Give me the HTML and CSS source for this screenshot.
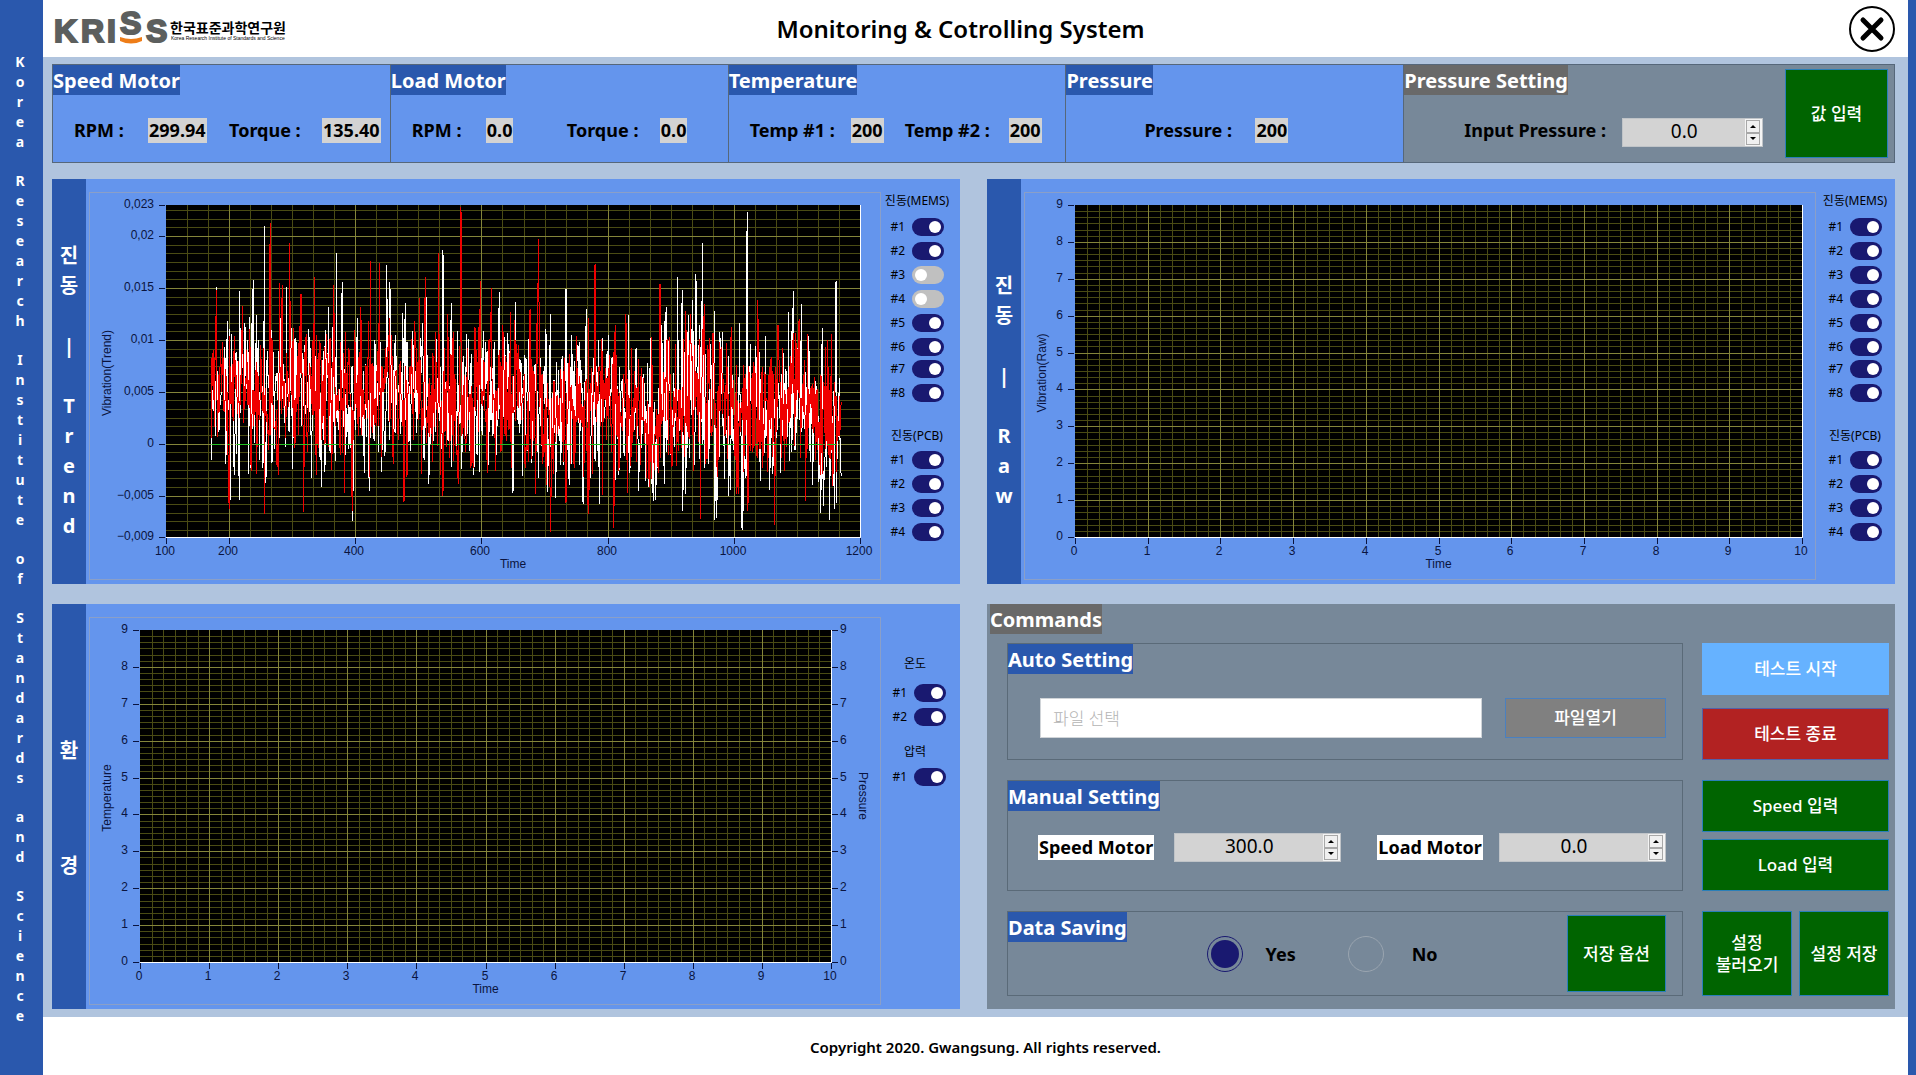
FILE: index.html
```html
<!DOCTYPE html>
<html lang="ko">
<head>
<meta charset="utf-8">
<title>Monitoring &amp; Cotrolling System</title>
<link rel="stylesheet" href="styles.css">
</head>
<body>
<div class="app">
  <aside class="rail">
    <span class="rail-word">K
o
r
e
a</span>
    <span class="rail-word">R
e
s
e
a
r
c
h</span>
    <span class="rail-word">I
n
s
t
i
t
u
t
e</span>
    <span class="rail-word">o
f</span>
    <span class="rail-word">S
t
a
n
d
a
r
d
s</span>
    <span class="rail-word">a
n
d</span>
    <span class="rail-word">S
c
i
e
n
c
e</span>
  </aside>

  <div class="page">
    <header class="header">
      <svg class="logo" width="248" height="56" viewBox="-4 -8 248 56" role="img" aria-label="KRISS">
        <g class="logo-kriss">
          <text x="-2 25 51" y="33">KRI</text>
          <text x="64" y="25">S</text>
          <text x="90" y="33">S</text>
        </g>
        <path d="M64 28 Q75 32 86 28 V32 Q75 37 64 32 Z" fill="#ee7d18"/>
        <text class="logo-korean" x="114" y="24">한국표준과학연구원</text>
        <text class="logo-english" x="115" y="31">Korea Research Institute of Standards and Science</text>
      </svg>
      <h1 class="title">Monitoring &amp; Cotrolling System</h1>
      <button class="close" type="button" aria-label="Close">
        <svg width="46" height="46" viewBox="0 0 46 46">
          <circle cx="23" cy="23" r="22" fill="none" stroke="#000" stroke-width="2"/>
          <path d="M14 14 L32 32 M32 14 L14 32" stroke="#000" stroke-width="5" stroke-linecap="round"/>
        </svg>
      </button>
    </header>

    <main class="main">
      <section class="status">
        <div class="status-cell">
          <h2 class="tag">Speed Motor</h2>
          <div class="readings readings-motor">
            <span>RPM :</span><output>299.94</output><span>Torque :</span><output>135.40</output>
          </div>
        </div>
        <div class="status-cell">
          <h2 class="tag">Load Motor</h2>
          <div class="readings readings-motor">
            <span>RPM :</span><output>0.0</output><span>Torque :</span><output>0.0</output>
          </div>
        </div>
        <div class="status-cell">
          <h2 class="tag">Temperature</h2>
          <div class="readings readings-temp">
            <span>Temp #1 :</span><output>200</output><span>Temp #2 :</span><output>200</output>
          </div>
        </div>
        <div class="status-cell">
          <h2 class="tag">Pressure</h2>
          <div class="readings readings-pressure">
            <span>Pressure :</span><output>200</output>
          </div>
        </div>
        <div class="status-cell status-setting">
          <div>
            <h2 class="tag tag-gray">Pressure Setting</h2>
            <div class="readings readings-setting">
              <label for="pressure-input">Input Pressure :</label>
              <div class="spinner">
                <input id="pressure-input" type="text" inputmode="decimal" value="0.0">
                <div class="spinner-buttons"><button type="button" class="up" aria-label="Increase"></button><button type="button" class="down" aria-label="Decrease"></button></div>
              </div>
            </div>
          </div>
          <button class="btn btn-green" type="button">값 입력</button>
        </div>
      </section>

      <div class="panels">
        <section class="panel panel-trend">
          <h2 class="tab tab-offset">진
동

|

T
r
e
n
d</h2>
          <div class="frame"><svg class="chart" data-chart="trend"></svg></div>
          <div class="switches">
            <h3>진동(MEMS)</h3>
            <label>#1<input type="checkbox" checked></label>
            <label>#2<input type="checkbox" checked></label>
            <label>#3<input type="checkbox"></label>
            <label>#4<input type="checkbox"></label>
            <label>#5<input type="checkbox" checked></label>
            <label>#6<input type="checkbox" checked></label>
            <label class="tight">#7<input type="checkbox" checked></label>
            <label>#8<input type="checkbox" checked></label>
            <h3 class="second">진동(PCB)</h3>
            <label>#1<input type="checkbox" checked></label>
            <label>#2<input type="checkbox" checked></label>
            <label>#3<input type="checkbox" checked></label>
            <label>#4<input type="checkbox" checked></label>
          </div>
        </section>

        <section class="panel panel-raw">
          <h2 class="tab tab-offset">진
동

|

R
a
w</h2>
          <div class="frame"><svg class="chart" data-chart="raw"></svg></div>
          <div class="switches">
            <h3>진동(MEMS)</h3>
            <label>#1<input type="checkbox" checked></label>
            <label>#2<input type="checkbox" checked></label>
            <label>#3<input type="checkbox" checked></label>
            <label>#4<input type="checkbox" checked></label>
            <label>#5<input type="checkbox" checked></label>
            <label>#6<input type="checkbox" checked></label>
            <label class="tight">#7<input type="checkbox" checked></label>
            <label>#8<input type="checkbox" checked></label>
            <h3 class="second">진동(PCB)</h3>
            <label>#1<input type="checkbox" checked></label>
            <label>#2<input type="checkbox" checked></label>
            <label>#3<input type="checkbox" checked></label>
            <label>#4<input type="checkbox" checked></label>
          </div>
        </section>

        <section class="panel panel-env">
          <h2 class="tab tab-spread"><span>환</span><span>경</span></h2>
          <div class="frame"><svg class="chart" data-chart="environment"></svg></div>
          <div class="switches">
            <h3>온도</h3>
            <label>#1<input type="checkbox" checked></label>
            <label>#2<input type="checkbox" checked></label>
            <h3 class="second">압력</h3>
            <label>#1<input type="checkbox" checked></label>
          </div>
        </section>

        <section class="commands">
          <h2 class="tag tag-gray commands-title">Commands</h2>
          <div class="commands-grid">
            <div class="box">
              <h3 class="tag">Auto Setting</h3>
              <div class="file-row">
                <input class="file-name" type="text" placeholder="파일 선택" aria-label="파일 선택">
                <button class="btn btn-file" type="button">파일열기</button>
              </div>
            </div>
            <div class="actions actions-spread">
              <button class="btn btn-start" type="button">테스트 시작</button>
              <button class="btn btn-stop" type="button">테스트 종료</button>
            </div>

            <div class="box">
              <h3 class="tag">Manual Setting</h3>
              <div class="manual-row">
                <label class="chip" for="speed-input">Speed Motor</label>
                <div class="spinner">
                  <input id="speed-input" type="text" inputmode="decimal" value="300.0">
                  <div class="spinner-buttons"><button type="button" class="up" aria-label="Increase"></button><button type="button" class="down" aria-label="Decrease"></button></div>
                </div>
                <label class="chip" for="load-input">Load Motor</label>
                <div class="spinner">
                  <input id="load-input" type="text" inputmode="decimal" value="0.0">
                  <div class="spinner-buttons"><button type="button" class="up" aria-label="Increase"></button><button type="button" class="down" aria-label="Decrease"></button></div>
                </div>
              </div>
            </div>
            <div class="actions">
              <button class="btn btn-green" type="button">Speed 입력</button>
              <button class="btn btn-green" type="button">Load 입력</button>
            </div>

            <div class="box box-saving">
              <h3 class="tag">Data Saving</h3>
              <div class="choices">
                <label><input type="radio" name="saving" checked>Yes</label>
                <label><input type="radio" name="saving">No</label>
              </div>
              <button class="btn btn-green" type="button">저장 옵션</button>
            </div>
            <div class="actions actions-row">
              <button class="btn btn-green" type="button">설정<br>불러오기</button>
              <button class="btn btn-green" type="button">설정 저장</button>
            </div>
          </div>
        </section>
      </div>
    </main>

    <footer class="footer">Copyright 2020. Gwangsung. All rights reserved.</footer>
  </div>
</div>
<script src="charts.js"></script>
</body>
</html>
```
FILE: styles.css
```css
* { box-sizing: border-box; }

body {
  margin: 0;
  font-family: "Noto Sans", "Noto Sans CJK KR", sans-serif;
  font-size: 17px;
  color: #000;
  background: #2a58ad;
}

h1, h2, h3 { margin: 0; }

button, input { font: inherit; margin: 0; }

.app {
  display: flex;
  min-height: 100vh;
  padding-right: 8px;
}

/* left rail */
.rail {
  flex: none;
  display: flex;
  flex-direction: column;
  gap: 19px;
  width: 43px;
  padding: 52px 3px 0 0;
  color: #fff;
  font-size: 14px;
  font-weight: 700;
  line-height: 20px;
  text-align: center;
}

.rail-word { white-space: pre; }

.page {
  flex: 1;
  display: flex;
  flex-direction: column;
  min-width: 0;
}

/* header and footer */
.header {
  display: grid;
  grid-template-columns: 1fr auto 1fr;
  align-items: center;
  height: 57px;
  padding: 0 13px;
  background: #fff;
}

.logo {
  display: block;
  margin-left: -4px;
  overflow: visible;
}

.logo-kriss {
  font-family: "Liberation Sans", sans-serif;
  font-size: 32px;
  font-weight: 700;
  fill: #5c5f5e;
  stroke: #5c5f5e;
  stroke-width: 2px;
}

.logo-korean {
  font-family: "Noto Sans CJK KR", sans-serif;
  font-size: 14px;
  font-weight: 700;
}

.logo-english {
  font-family: "Liberation Sans", sans-serif;
  font-size: 5px;
}

.title {
  margin-right: 30px;
  font-size: 24px;
  font-weight: 600;
  line-height: 32px;
}

.close {
  justify-self: end;
  display: block;
  width: 46px;
  height: 46px;
  padding: 0;
  border: 0;
  border-radius: 50%;
  background: none;
}

.close svg { display: block; }

.footer {
  height: 58px;
  padding: 0 0 0 20px;
  background: #fff;
  font-size: 15px;
  font-weight: 600;
  line-height: 60px;
  text-align: center;
}

/* main area */
.main {
  flex: 1;
  display: flex;
  flex-direction: column;
  gap: 16px;
  padding: 7px 13px 8px 9px;
  background: #b0c4de;
}

.panels {
  flex: 1;
  display: grid;
  grid-template-columns: minmax(0, 1fr) minmax(0, 1fr);
  grid-template-rows: 1fr 1fr;
  gap: 20px 27px;
}

.tag {
  width: fit-content;
  padding: 2px 0 0;
  background: #2a58ad;
  color: #fff;
  font-size: 20px;
  font-weight: 700;
  line-height: 28px;
  white-space: nowrap;
}

.tag-gray { background: #696969; }

/* status bar */
.status {
  display: grid;
  grid-template-columns: repeat(4, 338fr) 491fr;
  border: 1px solid #56677a;
  border-left: 0;
}

.status-cell {
  height: 97px;
  border-left: 1px solid #56677a;
  background: #6495ed;
}

.readings {
  display: grid;
  align-items: start;
  justify-items: start;
  margin-top: 23px;
  font-size: 18px;
  font-weight: 700;
  line-height: 25px;
  white-space: nowrap;
}

.readings output {
  padding: 0 1px;
  background: #d3d3d3;
}

.readings-motor {
  grid-template-columns: 74px 81px 93px 1fr;
  padding-left: 21px;
}

.readings-temp {
  grid-template-columns: 101px 54px 104px 1fr;
  padding-left: 21px;
}

.readings-pressure {
  grid-template-columns: 111px 1fr;
  padding-left: 78px;
}

.readings-setting {
  grid-template-columns: 158px 141px;
  padding-left: 60px;
}

.status-setting {
  display: flex;
  justify-content: space-between;
  padding-right: 6px;
  background: #778899;
}

.status-setting > .btn {
  width: 103px;
  margin: 4px 0;
}

/* controls */
.btn {
  padding: 0;
  border: 1px solid #2a7fb8;
  color: #fff;
  font-size: 17px;
  font-weight: 500;
  line-height: 22px;
}

.btn-green { background: #006400; }
.btn-stop { background: #b22222; border-color: #5560a8; }
.btn-start { background: #66b2ff; border-color: #66b2ff; }
.btn-file { background: #808080; border-color: #4a80c0; }

.spinner {
  display: flex;
  width: 100%;
  min-width: 0;
  height: 29px;
  border: 1px solid #c0c4c8;
  background: #d3d3d3;
}

.spinner input {
  flex: 1;
  width: 100%;
  min-width: 0;
  padding: 0 0 4px;
  border: 0;
  background: none;
  font-size: 19px;
  font-weight: 400;
  line-height: 22px;
  text-align: center;
}

.spinner-buttons {
  flex: none;
  display: grid;
  grid-template-rows: 1fr 1fr;
  width: 17px;
  padding: 1px 2px 1px 1px;
  background: #f4f4f4;
}

.spinner-buttons button {
  display: grid;
  place-items: center;
  padding: 0;
  border: 1px solid #a8a8a8;
  background: #f0f0f0;
}

.spinner-buttons button::before {
  content: "";
  border: 3px solid transparent;
}

.spinner-buttons .up::before { border-top: 0; border-bottom-color: #000; }
.spinner-buttons .down::before { border-bottom: 0; border-top-color: #000; }

/* chart panels */
.panel {
  display: grid;
  grid-template-columns: 34px minmax(0, 1fr) 79px;
  min-height: 405px;
  background: #6495ed;
}

.tab {
  display: flex;
  flex-direction: column;
  align-items: center;
  justify-content: center;
  background: #2a58ad;
  color: #fff;
  font-size: 20px;
  font-weight: 700;
  line-height: 30px;
  text-align: center;
  white-space: pre;
}

.tab-offset { padding-top: 18px; }
.tab-spread { gap: 85px; padding-top: 4px; }

.frame {
  margin: 13px 0 4px 3px;
  border: 1px solid #8a9fc8;
}

.chart {
  display: block;
  width: 100%;
  height: 100%;
  font-family: "Liberation Sans", sans-serif;
  font-size: 12px;
  fill: #0a1440;
}

.grid-minor { stroke: #4a4b14; }
.grid-major { stroke: #84853a; }
.axis-tick { stroke: #0a1440; }
.plot-edge { stroke: #fff; }
.zero-line { stroke: #22c022; }
.trace { fill: none; stroke-width: 1; shape-rendering: crispEdges; }
.trace-white { stroke: #fff; }
.trace-red { stroke: #f00000; }

.switches {
  display: flex;
  flex-direction: column;
  align-items: flex-end;
  padding: 12px 16px 0 0;
  font-size: 12px;
}

.panel-raw .switches { padding-right: 13px; }
.panel-env .switches { padding: 50px 14px 0 0; }

.switches h3 {
  width: 70px;
  height: 20px;
  margin: 0 -8px 7px 0;
  font-size: 12px;
  font-weight: 400;
  line-height: 20px;
  text-align: center;
  white-space: nowrap;
}

.switches .second { margin-top: 18px; margin-bottom: 5px; }

.panel-env .switches h3 { width: 62px; margin: 0 0 10px; }
.panel-env .switches .second { margin: 10px 0 6px; }

.switches label {
  display: flex;
  align-items: center;
  gap: 7px;
  height: 18px;
  margin-bottom: 6px;
  line-height: 18px;
}

.switches .tight { margin-top: -2px; }

.switches input {
  appearance: none;
  display: flex;
  align-items: center;
  width: 32px;
  height: 18px;
  padding: 0 3px;
  border-radius: 9px;
  background: #c0c0c0;
}

.switches input::before {
  content: "";
  width: 12px;
  height: 12px;
  border-radius: 50%;
  background: #fff;
}

.switches input:checked {
  justify-content: flex-end;
  background: #191970;
}

/* command panel */
.commands {
  min-height: 405px;
  padding: 0 6px 13px 20px;
  background: #778899;
}

.commands-title { margin-left: -17px; }

.commands-grid {
  display: grid;
  grid-template-columns: minmax(0, 1fr) 187px;
  grid-template-rows: 117px 111px 85px;
  gap: 20px 19px;
  margin-top: 9px;
}

.box { border: 1px solid #5a6a78; }

.file-row {
  display: grid;
  grid-template-columns: minmax(0, 1fr) 161px;
  gap: 23px;
  margin: 24px 16px 0 32px;
}

.file-name {
  height: 40px;
  padding: 0 12px;
  border: 1px solid #d0d4d8;
  background: #fff;
}

.file-name::placeholder { color: #b4b4b4; font-weight: 300; }

.actions {
  display: grid;
  grid-template-rows: 1fr 1fr;
  gap: 7px;
}

.actions-spread { gap: 13px; }

.actions-row {
  grid-template-rows: 1fr;
  grid-template-columns: 1fr 1fr;
}

.manual-row {
  display: flex;
  align-items: center;
  margin: 22px 16px 0 30px;
}

.manual-row .spinner { flex: 1; }

.chip {
  margin-right: 20px;
  padding: 0 1px;
  background: #fff;
  font-size: 18px;
  font-weight: 700;
  line-height: 25px;
  white-space: nowrap;
}

.spinner + .chip { margin-left: 36px; margin-right: 16px; }

.box-saving {
  display: flex;
  align-items: flex-start;
  padding-right: 16px;
}

.box-saving .btn {
  width: 99px;
  height: 77px;
  margin: 3px 0 0 auto;
}

.choices {
  display: flex;
  gap: 52px;
  margin: 24px 0 0 80px;
}

.choices label {
  display: flex;
  align-items: center;
  gap: 23px;
  font-size: 18px;
  font-weight: 700;
}

.choices label + label { gap: 28px; }

.choices input {
  appearance: none;
  display: grid;
  place-items: center;
  width: 36px;
  height: 36px;
  border: 1px solid #9aa5b0;
  border-radius: 50%;
}

.choices input:checked { border-color: #191970; }

.choices input:checked::before {
  content: "";
  width: 28px;
  height: 28px;
  border-radius: 50%;
  background: #191970;
}
```
FILE: charts.js
```js
const NS = "http://www.w3.org/2000/svg";

// Seeded generator, so that a redraw keeps the same traces.
function generator(seed) {
  let s = seed;
  return () => {
    s = (s * 1664525 + 1013904223) % 4294967296;
    return s / 4294967296;
  };
}

const START = 172;
const END = 1170;

// Noise around a slowly falling mean, with [time, value] peaks on top.
function series(seed, peaks, mean) {
  const rnd = generator(seed);
  const values = [];
  for (let t = START; t <= END; t++) {
    const noise = rnd() + rnd() + rnd() + rnd() - 2;
    const lift = rnd() > 0.92 ? rnd() * 0.006 : 0;
    const centre = mean - 0.002 * (t - START) / (END - START) + 0.0008 * Math.sin(t / 24);
    values.push(centre + noise * 0.0064 + lift);
  }
  for (const [t, v] of peaks) values[t - START] = v;
  return values;
}

const white = series(11, [
  [180, 0.0151], [202, -0.0054], [216, -0.0054], [238, 0.0158], [256, 0.021], [291, 0.0151],
  [346, -0.0042], [370, 0.0184], [380, 0.0156], [396, -0.0075], [450, 0.0172], [455, 0.0156],
  [539, 0.0187], [628, 0.0146], [650, -0.0048], [734, 0.0149], [761, -0.0058], [766, 0.013],
  [872, -0.0055], [911, 0.0161], [918, 0.0148], [919, -0.0065], [940, 0.0163], [950, 0.0193],
  [973, -0.0072], [1013, -0.0083], [1021, 0.0223], [1094, 0.0147], [1159, -0.0063], [1162, 0.0157]
], 0.0046);

const red = series(47, [
  [200, -0.0063], [256, -0.0068], [265, 0.0213], [280, 0.0155], [296, 0.0193], [318, -0.0066],
  [335, 0.0161], [366, 0.0153], [424, 0.0176], [438, 0.0174], [478, -0.0055], [532, 0.0184],
  [567, 0.0228], [568, 0.022], [616, 0.015], [690, 0.0197], [691, 0.0165], [710, -0.0085],
  [769, -0.0068], [780, 0.0173], [810, -0.0081], [883, 0.0154], [953, 0.0135], [1022, -0.0065],
  [1038, 0.0138], [1065, -0.0078]
], 0.005);

const digits = Array.from({ length: 10 }, (_, i) => i);

const charts = {
  trend: {
    inset: { left: 76, right: 20, top: 12, bottom: 42 },
    x: { min: 100, max: 1200, minor: 100 / 3, major: 200, labels: [100, 200, 400, 600, 800, 1000, 1200] },
    y: { min: -0.009, max: 0.023, minor: 0.005 / 6, major: 0.005, labels: [0.023, 0.02, 0.015, 0.01, 0.005, 0, -0.005, -0.009] },
    left: "Vibration(Trend)",
    traces: [["trace-white", white], ["trace-red", red]]
  },
  raw: {
    inset: { left: 50, right: 13, top: 12, bottom: 42 },
    x: { min: 0, max: 10, minor: 1 / 6, major: 1, labels: [...digits, 10] },
    y: { min: 0, max: 9, minor: 1 / 6, major: 1, labels: digits },
    left: "Vibration(Raw)"
  },
  environment: {
    inset: { left: 50, right: 49, top: 12, bottom: 42 },
    x: { min: 0, max: 10, minor: 1 / 6, major: 1, labels: [...digits, 10] },
    y: { min: 0, max: 9, minor: 1 / 6, major: 1, labels: digits },
    left: "Temperature",
    right: "Pressure"
  }
};

function add(svg, name, attrs, text) {
  const el = document.createElementNS(NS, name);
  for (const key in attrs) el.setAttribute(key, attrs[key]);
  if (text !== undefined) el.textContent = text;
  svg.appendChild(el);
}

const format = v => String(v).replace(".", ",").replace("-", "\u2212");

function draw(svg) {
  const c = charts[svg.dataset.chart];
  const width = svg.clientWidth;
  const height = svg.clientHeight;
  const x0 = c.inset.left, x1 = width - c.inset.right;
  const y0 = c.inset.top, y1 = height - c.inset.bottom;
  const px = v => x0 + (v - c.x.min) / (c.x.max - c.x.min) * (x1 - x0);
  const py = v => y1 - (v - c.y.min) / (c.y.max - c.y.min) * (y1 - y0);
  const snap = v => Math.round(v) + 0.5;

  svg.replaceChildren();
  add(svg, "rect", { x: x0, y: y0, width: x1 - x0, height: y1 - y0, fill: "#000" });

  for (const kind of ["minor", "major"]) {
    let d = "";
    for (let i = Math.ceil(c.x.min / c.x[kind]); i * c.x[kind] < c.x.max; i++)
      if (i * c.x[kind] > c.x.min) d += `M${snap(px(i * c.x[kind]))} ${y0}V${y1}`;
    for (let i = Math.ceil(c.y.min / c.y[kind]); i * c.y[kind] < c.y.max; i++)
      if (i * c.y[kind] > c.y.min) d += `M${x0} ${snap(py(i * c.y[kind]))}H${x1}`;
    add(svg, "path", { class: "grid-" + kind, d });
  }

  if (c.traces) {
    for (const [name, values] of c.traces) {
      const points = values.map((v, i) => `${px(START + i).toFixed(2)},${py(v).toFixed(1)}`).join(" ");
      add(svg, "polyline", { class: "trace " + name, points });
    }
    add(svg, "path", { class: "zero-line", "stroke-dasharray": "9 7 3 6 14 5", d: `M${px(START)} ${snap(py(0))}H${px(END)}` });
  }

  add(svg, "path", { class: "plot-edge", fill: "none", d: `M${x1 + 0.5} ${y0}V${y1 + 0.5}H${x0}` });

  let ticks = "";
  for (const v of c.x.labels) {
    ticks += `M${snap(px(v))} ${y1 + 1}v6`;
    add(svg, "text", { x: Math.round(px(v)) - 1, y: y1 + 18, "text-anchor": "middle" }, format(v));
  }
  for (const v of c.y.labels) {
    const y = snap(py(v));
    ticks += `M${x0 - 7} ${y}h6`;
    add(svg, "text", { x: x0 - 12, y: y + 2, "text-anchor": "end" }, format(v));
    if (c.right) {
      ticks += `M${x1 + 1} ${y}h6`;
      add(svg, "text", { x: x1 + 9, y: y + 2 }, format(v));
    }
  }
  add(svg, "path", { class: "axis-tick", d: ticks });

  const middle = (y0 + y1) / 2;
  add(svg, "text", { x: (x0 + x1) / 2, y: y1 + 31, "text-anchor": "middle" }, "Time");
  add(svg, "text", { transform: `translate(21 ${middle + 2}) rotate(-90)`, "text-anchor": "middle" }, c.left);
  if (c.right)
    add(svg, "text", { transform: `translate(${x1 + 28} ${middle}) rotate(90)`, "text-anchor": "middle" }, c.right);
}

function drawAll() {
  document.querySelectorAll(".chart").forEach(draw);
}

drawAll();
window.addEventListener("resize", drawAll);
```
